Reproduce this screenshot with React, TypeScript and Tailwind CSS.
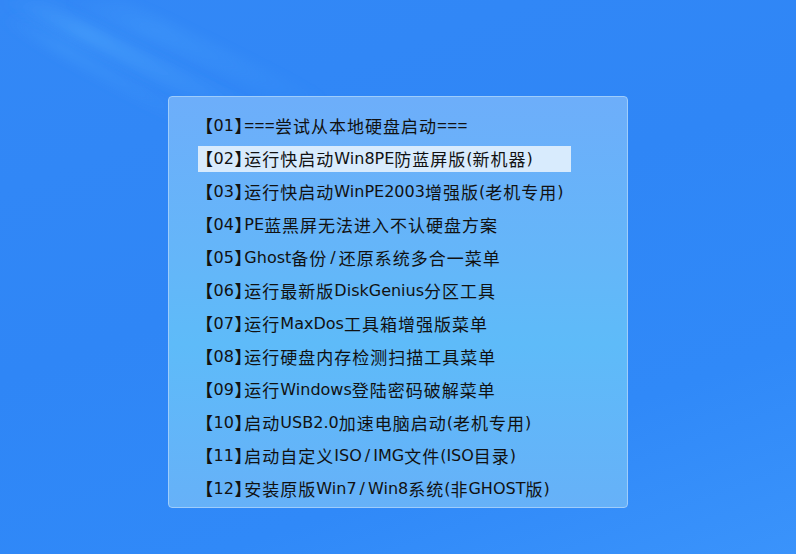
import React from "react";

const items = [
  "【01】===尝试从本地硬盘启动===",
  "【02】运行快启动Win8PE防蓝屏版(新机器)",
  "【03】运行快启动WinPE2003增强版(老机专用)",
  "【04】PE蓝黑屏无法进入不认硬盘方案",
  "【05】Ghost备份/还原系统多合一菜单",
  "【06】运行最新版DiskGenius分区工具",
  "【07】运行MaxDos工具箱增强版菜单",
  "【08】运行硬盘内存检测扫描工具菜单",
  "【09】运行Windows登陆密码破解菜单",
  "【10】启动USB2.0加速电脑启动(老机专用)",
  "【11】启动自定义ISO/IMG文件(ISO目录)",
  "【12】安装原版Win7/Win8系统(非GHOST版)",
];

function Runs({ text }: { text: string }) {
  const parts: React.ReactNode[] = [];
  const re = /(【|】|=+|[\u4e00-\u9fff]+|\/|[^\u4e00-\u9fff【】/=]+)/g;
  let m: RegExpExecArray | null;
  let k = 0;
  while ((m = re.exec(text))) {
    const s = m[0];
    if (s === "【" || s === "】") {
      parts.push(
        <span
          key={k++}
          className="px-[1px] font-['Noto_Sans_CJK_SC',sans-serif] font-bold text-[17px] [font-feature-settings:'palt']"
        >
          {s}
        </span>
      );
    } else if (s[0] === "=") {
      parts.push(
        <span key={k++} className="font-['Liberation_Sans',sans-serif] text-[17px] tracking-[0.3px]">
          {s}
        </span>
      );
    } else if (s === "/") {
      parts.push(
        <span key={k++} className="px-[3px]">
          {s}
        </span>
      );
    } else if (/[\u4e00-\u9fff]/.test(s)) {
      parts.push(
        <span key={k++} className="font-['Noto_Sans_CJK_SC',sans-serif] text-[17px] tracking-[1px]">
          {s}
        </span>
      );
    } else {
      parts.push(<span key={k++}>{s}</span>);
    }
  }
  return <>{parts}</>;
}

export default function App() {
  return (
    <div className="relative w-[796px] h-[554px] overflow-hidden bg-[linear-gradient(160deg,#3388f6_0%,#2f86f6_45%,#3089f8_75%,#3a93fb_100%)]">
      <svg className="absolute inset-0 pointer-events-none" width="796" height="554" viewBox="0 0 796 554">
        <defs>
          <linearGradient id="s1" x1="0" y1="0" x2="1" y2="1">
            <stop offset="0" stopColor="#5ab4ff" stopOpacity="0.0" />
            <stop offset="0.3" stopColor="#5ab4ff" stopOpacity="0.35" />
            <stop offset="1" stopColor="#5ab4ff" stopOpacity="0" />
          </linearGradient>
          <filter id="b1">
            <feGaussianBlur stdDeviation="6" />
          </filter>
        </defs>
        <path d="M0 0 L40 0 L260 110 L230 118 Z" fill="url(#s1)" filter="url(#b1)" />
        <path d="M0 20 L20 15 L200 120 L180 125 Z" fill="url(#s1)" filter="url(#b1)" opacity="0.6" />
        <path d="M60 0 L120 0 L330 100 L300 110 Z" fill="url(#s1)" filter="url(#b1)" opacity="0.5" />
      </svg>
      <div className="relative flex justify-center pt-[96px]">
        <div className="w-[460px] rounded-[4px] border border-[#9fcdfb] bg-[linear-gradient(180deg,#6daefa_0%,#64b6f9_40%,#5ebbf9_60%,#66b1f8_100%)] pt-[16px] pb-[5px] pl-[29px]">
          <div className="flex flex-col gap-[7px] font-['DejaVu_Sans','Noto_Sans_CJK_SC',sans-serif] text-[16px] text-[#111] leading-[26px]">
            {items.map((t, i) => (
              <div
                key={i}
                className={
                  i === 1
                    ? "h-[26px] w-[373px] pl-[5px] bg-[#d8ebfd] whitespace-nowrap flex items-center"
                    : "h-[26px] w-[373px] pl-[5px] whitespace-nowrap flex items-center"
                }
              >
                <Runs text={t} />
              </div>
            ))}
          </div>
        </div>
      </div>
    </div>
  );
}
